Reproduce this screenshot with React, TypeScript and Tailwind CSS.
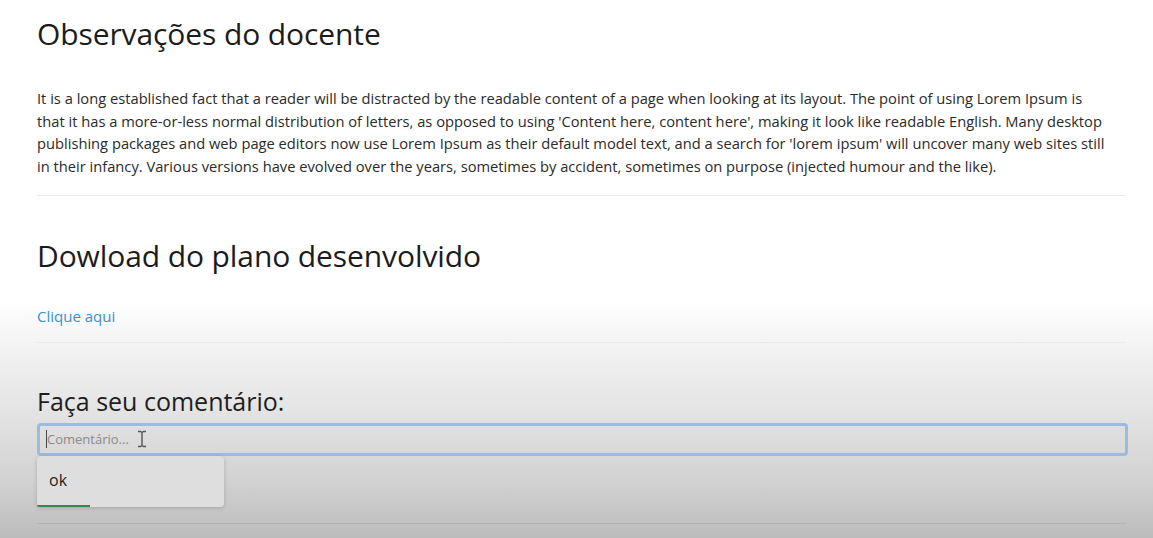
import React from "react";

export default function App() {
  const font = { fontFamily: '"Open Sans", "Noto Sans", sans-serif' };
  return (
    <div
      className="relative h-[538px] w-[1153px] overflow-hidden bg-[linear-gradient(to_bottom,#ffffff_0px,#ffffff_300px,#f3f3f3_345px,#e4e4e4_410px,#d2d2d2_480px,#bcbcbc_538px)] text-[#212529]"
      style={font}
    >
      <div className="ml-[37px] w-[1090px] pt-[14px]">
        <h2 className="text-[30px] leading-[40px] font-normal tracking-[-0.1px] text-[#1c1c1c]">Observações do docente</h2>
        <div className="mt-[33px] text-[14.7px] leading-[22.7px] text-[#2b2b2b] whitespace-nowrap">
          <div>It is a long established fact that a reader will be distracted by the readable content of a page when looking at its layout. The point of using Lorem Ipsum is</div>
          <div>that it has a more-or-less normal distribution of letters, as opposed to using 'Content here, content here', making it look like readable English. Many desktop</div>
          <div>publishing packages and web page editors now use Lorem Ipsum as their default model text, and a search for 'lorem ipsum' will uncover many web sites still</div>
          <div>in their infancy. Various versions have evolved over the years, sometimes by accident, sometimes on purpose (injected humour and the like).</div>
        </div>
        <div className="mt-[17px] h-px w-[1089px] bg-[#ebebeb]" />
        <h2 className="mt-[40px] text-[30px] leading-[40px] font-normal tracking-[-0.1px] text-[#1c1c1c]">Dowload do plano desenvolvido</h2>
        <div className="mt-[29px] text-[15px] leading-[22px] text-[#3a8fd8]">Clique aqui</div>
        <div className="mt-[15px] h-px w-[1089px] bg-[#e9e9e9]" />
        <div className="mt-[43px] text-[25px] leading-[30px] text-[#1e1e1e]">Faça seu comentário:</div>
        <div className="relative mt-[7px]">
          <div className="box-border flex h-[33px] w-[1091px] items-center rounded-[4px] border-[3px] border-[#9bbbe0] bg-transparent pl-[6px]">
            <span className="h-[18px] w-px bg-[#444]" />
            <span className="text-[13px] text-[#8a8a8a]">Comentário...</span>
            <svg className="ml-[8px]" width="10" height="18" viewBox="0 0 10 18">
              <path d="M1 1.5h2.5l1.5 1 1.5-1H9M5 2.5v13M1 16.5h2.5l1.5-1 1.5 1H9" stroke="#555" strokeWidth="1.4" fill="none" />
            </svg>
          </div>
          <div className="absolute left-0 top-[33px] h-[51px] w-[187px] rounded-[4px] bg-[#dedede] shadow-[0_1px_4px_rgba(0,0,0,0.18)]">
            <div className="pl-[12px] pt-[14px] text-[16px] leading-[20px] font-medium text-[#222]">ok</div>
            <div className="absolute bottom-0 left-0 h-[2px] w-[53px] rounded-bl-[4px] bg-[#2f8a52]" />
          </div>
        </div>
        <div className="mt-[67px] h-px w-[1089px] bg-[#b4b4b4]" />
      </div>
    </div>
  );
}
